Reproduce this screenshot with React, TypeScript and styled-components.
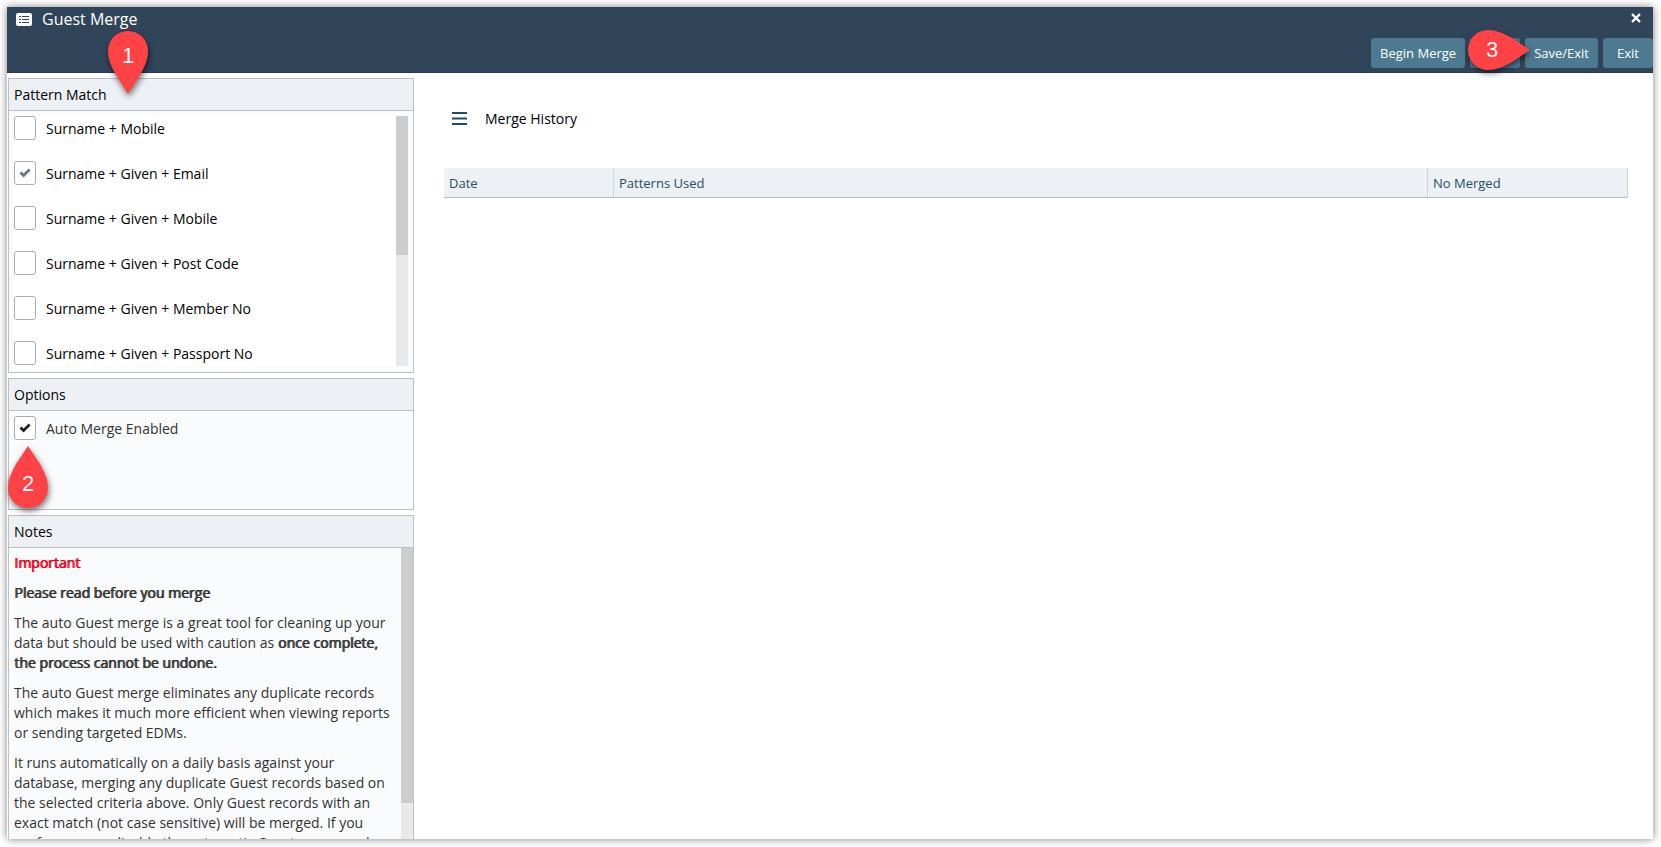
import React, { useState } from "react";
import styled, { createGlobalStyle, css } from "styled-components";

const GlobalStyle = createGlobalStyle`
  *, *::before, *::after { box-sizing: border-box; }
  html, body, #root { height: 100%; }
  body {
    margin: 0;
    background: #fff;
    color: #333;
    font: 14px/20px "Open Sans", "Noto Sans", sans-serif;
  }
  button, input { font: inherit; }
`;

const Page = styled.div`
  height: 100%;
  padding: 7px 8px 8px 7px;
`;

const Window = styled.div`
  display: flex;
  flex-direction: column;
  height: 100%;
  background: #fff;
  box-shadow: 0 0 8px rgba(0, 0, 0, 0.5);
`;

const Header = styled.header`
  display: flex;
  flex-direction: column;
  flex: none;
  height: 66px;
  background: #31455a;
  border-bottom: 1px solid #263a4e;
  color: #fff;
`;

const TitleBar = styled.div`
  display: flex;
  align-items: center;
  gap: 10px;
  height: 24px;
  padding: 0 12px 0 9px;
`;

const Title = styled.h1`
  flex: 1;
  margin: 0;
  font-size: 16px;
  font-weight: 400;
  line-height: 24px;
`;

const CloseButton = styled.button`
  display: flex;
  padding: 0 0 2px;
  border: 0;
  background: none;
  color: #fff;
  cursor: pointer;
`;

const Toolbar = styled.div`
  display: flex;
  justify-content: flex-end;
  gap: 5px;
  padding-top: 7px;
`;

const ToolSlot = styled.div`
  position: relative;
`;

const ToolButton = styled.button`
  display: block;
  height: 30px;
  min-width: 50px;
  padding: 0 9px;
  border: 0;
  border-radius: 3px;
  background: #4e7a91;
  color: #fff;
  font-size: 13px;
  line-height: 30px;
  cursor: pointer;
`;

const Body = styled.div`
  display: flex;
  flex: 1;
  min-height: 0;
`;

const Sidebar = styled.aside`
  display: flex;
  flex-direction: column;
  flex: none;
  gap: 5px;
  width: 407px;
  padding: 5px 0 0 1px;
`;

const Panel = styled.section<{ $fill?: boolean; $height?: number }>`
  position: relative;
  display: flex;
  flex-direction: column;
  border: 1px solid #bcc0c4;
  background: #fafbfd;
  ${(p) =>
    p.$fill
      ? css`
          flex: 1;
          min-height: 0;
          border-bottom: 0;
        `
      : css`
          flex: none;
          min-height: ${p.$height}px;
        `}
`;

const PanelTitle = styled.h2`
  flex: none;
  height: 32px;
  margin: 0;
  padding: 0 5px;
  border-bottom: 1px solid #bcc0c4;
  background: #edf0f5;
  color: #000;
  font-size: 14px;
  font-weight: 400;
  line-height: 32px;
`;

const PatternScroll = styled.div`
  display: flex;
  height: 250px;
  margin: 5px;
  overflow: hidden;
  background: #fff;
`;

const PatternList = styled.ul`
  display: flex;
  flex: 1;
  flex-direction: column;
  gap: 21px;
  margin: 0;
  padding: 0;
  list-style: none;
`;

const OptionArea = styled.div`
  padding: 5px;
`;

const CheckLabel = styled.label<{ $muted?: boolean }>`
  display: flex;
  align-items: flex-start;
  gap: 10px;
  height: 24px;
  color: ${(p) => (p.$muted ? "#333" : "#000")};
  line-height: 26px;
  cursor: pointer;
`;

const CheckFrame = styled.span`
  display: grid;
  flex: none;
  width: 22px;
  height: 24px;
  > * { grid-area: 1 / 1; place-self: center; }
`;

const CheckInput = styled.input`
  appearance: none;
  width: 22px;
  height: 24px;
  margin: 0;
  border: 1px solid #adadad;
  border-radius: 3px;
  background: #fff;
`;

const Tick = styled.svg<{ $soft?: boolean }>`
  width: 12px;
  height: 10px;
  fill: ${(p) => (p.$soft ? "#6b7280" : "#222")};
  pointer-events: none;
`;

const Track = styled.div<{ $thumb: number }>`
  flex: none;
  width: 12px;
  background: #e9e9e9;
  &::before {
    content: "";
    display: block;
    height: ${(p) => p.$thumb}px;
    background: #cdcdcd;
  }
`;

const NotesScroll = styled.div`
  display: flex;
  flex: 1;
  min-height: 0;
  overflow: hidden;
`;

const NotesText = styled.div`
  flex: 1;
  padding: 5px 6px 5px 5px;
`;

const Note = styled.p`
  margin: 0 0 10px;
`;

const Strong = styled.span<{ $alert?: boolean }>`
  color: ${(p) => (p.$alert ? "#f00020" : "#333")};
  text-shadow: 1px 0 0 currentColor;
`;

const Main = styled.main`
  flex: 1;
  padding: 30px 25px 0 30px;
`;

const MainHead = styled.div`
  display: flex;
  align-items: center;
  gap: 18px;
  height: 32px;
  padding-left: 8px;
`;

const MenuButton = styled.button`
  display: flex;
  padding: 0;
  border: 0;
  background: none;
  cursor: pointer;
`;

const MainTitle = styled.h2`
  margin: 0;
  color: #000;
  font-size: 14px;
  font-weight: 400;
`;

const HistoryTable = styled.table`
  width: 100%;
  margin-top: 33px;
  border-collapse: separate;
  border-spacing: 0;
  table-layout: fixed;
`;

const HeadCell = styled.th<{ $width?: number }>`
  width: ${(p) => (p.$width ? `${p.$width}px` : "auto")};
  height: 30px;
  padding: 0 5px;
  border-right: 1px solid #d0d4d8;
  border-bottom: 1px solid #b8bcc0;
  background: #edf0f5;
  color: #1f4e63;
  font-size: 13px;
  font-weight: 400;
  line-height: 20px;
  text-align: left;
`;

type Direction = "down" | "up" | "right";

const places = {
  down: css`left: 99px; top: -48px;`,
  up: css`left: -1px; top: 67px;`,
  right: css`right: -10px; top: -8px;`,
};

const Pin = styled.div<{ $dir: Direction }>`
  position: absolute;
  z-index: 2;
  ${(p) => places[p.$dir]}
  display: grid;
  width: ${(p) => (p.$dir === "right" ? 62 : 40)}px;
  height: ${(p) => (p.$dir === "right" ? 40 : 62)}px;
  pointer-events: none;
  filter: drop-shadow(1px 3px 3px rgba(0, 0, 0, 0.55));
  > * { grid-area: 1 / 1; }
`;

const PinNumber = styled.span<{ $dir: Direction }>`
  width: ${(p) => (p.$dir === "right" ? 48 : 40)}px;
  align-self: ${(p) => (p.$dir === "up" ? "end" : "start")};
  color: #fff;
  font-family: "Liberation Sans", Arial, sans-serif;
  font-size: 22px;
  line-height: ${(p) => (p.$dir === "right" ? 40 : 50)}px;
  text-align: center;
`;

const pinShapes: Record<Direction, string> = {
  down: "M20 63 8 44C3 35 0 28 0 20a20 20 0 0 1 40 0C40 28 37 35 32 44z",
  up: "M20 0 8 18C3 27 0 34 0 42a20 20 0 0 0 40 0C40 34 37 27 32 18z",
  right: "M62 20 44 8C35 3 28 0 20 0a20 20 0 0 0 0 40C28 40 35 37 44 32z",
};

function Marker({ dir, children }: { dir: Direction; children: React.ReactNode }) {
  const right = dir === "right";
  return (
    <Pin $dir={dir}>
      <svg width={right ? 62 : 40} height={right ? 40 : 63} aria-hidden="true">
        <path d={pinShapes[dir]} fill="#ff4245" />
      </svg>
      <PinNumber $dir={dir}>{children}</PinNumber>
    </Pin>
  );
}

interface CheckProps {
  label: string;
  initial?: boolean;
  muted?: boolean;
}

function Check({ label, initial = false, muted }: CheckProps) {
  const [checked, setChecked] = useState(initial);
  return (
    <CheckLabel $muted={muted}>
      <CheckFrame>
        <CheckInput type="checkbox" checked={checked} onChange={(e) => setChecked(e.target.checked)} />
        {checked && (
          <Tick $soft={!muted} viewBox="0 0 12 10" aria-hidden="true">
            <path d="M0.5 5.4 2.4 3.5 4.6 5.6 9.6 0.6 11.5 2.5 4.6 9.4z" />
          </Tick>
        )}
      </CheckFrame>
      {label}
    </CheckLabel>
  );
}

const patterns = [
  { label: "Surname + Mobile" },
  { label: "Surname + Given + Email", checked: true },
  { label: "Surname + Given + Mobile" },
  { label: "Surname + Given + Post Code" },
  { label: "Surname + Given + Member No" },
  { label: "Surname + Given + Passport No" },
];

export default function App() {
  return (
    <Page>
      <GlobalStyle />
      <Window>
        <Header>
          <TitleBar>
            <svg width="16" height="13" viewBox="0 0 16 13" aria-hidden="true">
              <rect width="16" height="13" rx="2" fill="#fff" />
              <path d="M3 3h2v1H3zM6 3h7v1H6zM3 6h2v1H3zM6 6h7v1H6zM3 9h2v1H3zM6 9h7v1H6z" fill="#31455a" />
            </svg>
            <Title>Guest Merge</Title>
            <CloseButton type="button" aria-label="Close">
              <svg width="10" height="10" viewBox="0 0 10 10" aria-hidden="true">
                <path d="M1 1 9 9M9 1 1 9" stroke="#fff" strokeWidth="2.4" />
              </svg>
            </CloseButton>
          </TitleBar>
          <Toolbar>
            <ToolButton type="button">Begin Merge</ToolButton>
            <ToolSlot>
              <ToolButton type="button" aria-label="Save" />
              <Marker dir="right">3</Marker>
            </ToolSlot>
            <ToolButton type="button">Save/Exit</ToolButton>
            <ToolButton type="button">Exit</ToolButton>
          </Toolbar>
        </Header>
        <Body>
          <Sidebar>
            <Panel $height={295}>
              <PanelTitle>Pattern Match</PanelTitle>
              <PatternScroll>
                <PatternList>
                  {patterns.map((p) => (
                    <li key={p.label}>
                      <Check label={p.label} initial={p.checked} />
                    </li>
                  ))}
                </PatternList>
                <Track $thumb={139} />
              </PatternScroll>
              <Marker dir="down">1</Marker>
            </Panel>
            <Panel $height={132}>
              <PanelTitle>Options</PanelTitle>
              <OptionArea>
                <Check label="Auto Merge Enabled" initial muted />
              </OptionArea>
              <Marker dir="up">2</Marker>
            </Panel>
            <Panel $fill>
              <PanelTitle>Notes</PanelTitle>
              <NotesScroll>
                <NotesText>
                  <Note><Strong $alert>Important</Strong></Note>
                  <Note><Strong>Please read before you merge</Strong></Note>
                  <Note>
                    The auto Guest merge is a great tool for cleaning up your data but should be used
                    with caution as <Strong>once complete, the process cannot be undone.</Strong>
                  </Note>
                  <Note>
                    The auto Guest merge eliminates any duplicate records which makes it much more
                    efficient when viewing reports or sending targeted EDMs.
                  </Note>
                  <Note>
                    It runs automatically on a daily basis against your database, merging any
                    duplicate Guest records based on the selected criteria above. Only Guest records
                    with an exact match (not case sensitive) will be merged. If you prefer you can
                    disable the automatic Guest merge and
                  </Note>
                </NotesText>
                <Track $thumb={255} />
              </NotesScroll>
            </Panel>
          </Sidebar>
          <Main>
            <MainHead>
              <MenuButton type="button" aria-label="Menu">
                <svg width="15" height="14" viewBox="0 0 15 14" aria-hidden="true">
                  <path d="M0 0h15v2H0zM0 5.5h15v2H0zM0 11h15v2H0z" fill="#1f4e63" />
                </svg>
              </MenuButton>
              <MainTitle>Merge History</MainTitle>
            </MainHead>
            <HistoryTable>
              <thead>
                <tr>
                  <HeadCell scope="col" $width={170}>Date</HeadCell>
                  <HeadCell scope="col">Patterns Used</HeadCell>
                  <HeadCell scope="col" $width={200}>No Merged</HeadCell>
                </tr>
              </thead>
            </HistoryTable>
          </Main>
        </Body>
      </Window>
    </Page>
  );
}
